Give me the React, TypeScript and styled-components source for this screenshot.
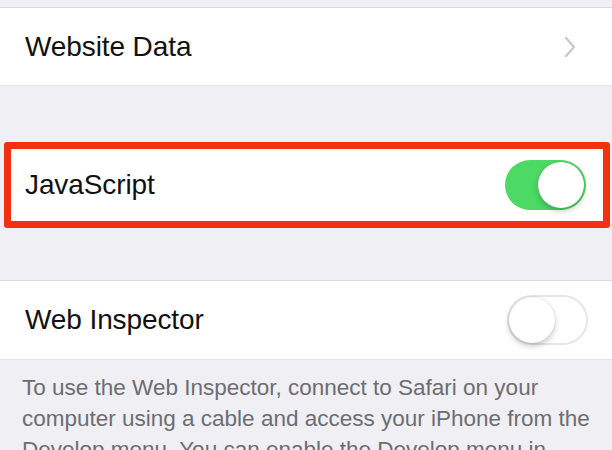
import styled, { createGlobalStyle } from 'styled-components'

const GlobalStyle = createGlobalStyle`
  html, body {
    margin: 0;
    padding: 0;
    background: #efeff4;
    font-family: 'Liberation Sans', Arial, sans-serif;
    -webkit-font-smoothing: antialiased;
  }
`

const Screen = styled.div`
  width: 612px;
  height: 450px;
  overflow: hidden;
  background: #efeff4;
  display: flex;
  flex-direction: column;
`

const Spacer = styled.div<{ $h: number }>`
  height: ${(p) => p.$h}px;
  flex-shrink: 0;
`

const Group = styled.div`
  background: #fff;
  border-top: 1px solid #d9d9de;
  border-bottom: 1px solid #e2e2e0;
`

const Highlight = styled.div`
  margin: 0 2px 0 4px;
  background: #fff;
  border: 7px solid #f3300f;
  border-radius: 3px;
`

const Row = styled.div<{ $h: number; $inset?: number }>`
  height: ${(p) => p.$h}px;
  display: flex;
  align-items: center;
  justify-content: space-between;
  padding: 0 ${(p) => 24 - (p.$inset ?? 0)}px 0 ${(p) => 25 - (p.$inset ?? 0)}px;
`

const Label = styled.span`
  font-size: 28px;
  color: #111;
  letter-spacing: -0.1px;
`

const Chevron = styled.svg`
  width: 12px;
  height: 22px;
  margin-right: 12px;
`

const Track = styled.div<{ $on: boolean }>`
  position: relative;
  width: 81px;
  height: 50px;
  border-radius: 25px;
  box-sizing: border-box;
  background: ${(p) => (p.$on ? '#4cd964' : '#fff')};
  border: ${(p) => (p.$on ? 'none' : '2px solid #e5e5ea')};
`

const Knob = styled.div<{ $on: boolean }>`
  position: absolute;
  top: ${(p) => (p.$on ? 2 : 0)}px;
  ${(p) => (p.$on ? 'right: 2px;' : 'left: 0px;')}
  width: 46px;
  height: 46px;
  border-radius: 50%;
  background: #fff;
  box-shadow: 0 3px 6px rgba(0, 0, 0, 0.22), 0 0 1px rgba(0, 0, 0, 0.2);
`

const Footer = styled.p`
  margin: 0;
  padding: 12px 8px 0 22px;
  font-size: 22.5px;
  line-height: 31px;
  color: #6d6d72;
`

const Toggle = ({ on }: { on: boolean }) => (
  <Track $on={on}>
    <Knob $on={on} />
  </Track>
)

export default function App() {
  return (
    <Screen>
      <GlobalStyle />
      <Spacer $h={7} />
      <Group>
        <Row $h={77}>
          <Label>Website Data</Label>
          <Chevron viewBox="0 0 12 22">
            <path d="M2 2 L10 11 L2 20" fill="none" stroke="#c7c7cc" strokeWidth="2.2" strokeLinecap="round" strokeLinejoin="round" />
          </Chevron>
        </Row>
      </Group>
      <Spacer $h={56} />
      <Highlight>
        <Row $h={72} $inset={11} style={{ paddingRight: 17 }}>
          <Label>JavaScript</Label>
          <Toggle on />
        </Row>
      </Highlight>
      <Spacer $h={52} />
      <Group>
        <Row $h={78}>
          <Label>Web Inspector</Label>
          <Toggle on={false} />
        </Row>
      </Group>
      <Footer>
        To use the Web Inspector, connect to Safari on your computer using a cable and access your iPhone from the
        Develop menu. You can enable the Develop menu in Safari's Advanced preferences on your computer.
      </Footer>
    </Screen>
  )
}
